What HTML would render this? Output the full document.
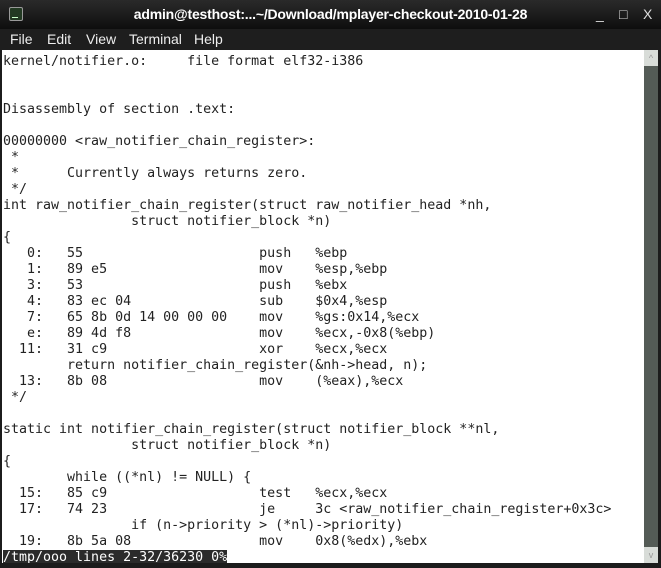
<!DOCTYPE html>
<html><head><meta charset="utf-8"><style>
*{margin:0;padding:0;box-sizing:border-box}
body{width:661px;height:568px;background:#1c1c1c;position:relative;overflow:hidden;font-family:"Liberation Sans",sans-serif}
#title{position:absolute;left:0;top:0;width:661px;height:29px;background:linear-gradient(#2a2a2a,#0e0e0e);color:#fff;}
#title .t{position:absolute;left:0;width:661px;top:6px;text-align:center;font-size:14px;font-weight:bold;letter-spacing:-0.2px}
#icon{position:absolute;left:9px;top:7px;width:14px;height:14px;border:1px solid #9a9a9a;background:#233a23;border-radius:2px}
#icon:after{content:"";position:absolute;left:2px;bottom:2px;width:6px;height:1px;background:#cfc}
.ctl{position:absolute;top:6px;color:#ddd;font-size:14px}
#menu{position:absolute;left:0;top:29px;width:661px;height:21px;background:#1e1e1e;color:#eee;font-size:14px}
#menu span{position:absolute;top:2px}
#term{position:absolute;left:2px;top:50px;width:642px;height:513px;background:#fff;overflow:hidden}
pre{position:absolute;left:1px;top:4px;font-family:"DejaVu Sans Mono","Liberation Mono",monospace;font-size:13.3px;line-height:16px;color:#222;white-space:pre}
.st{background:#2b2b2b;color:#fff}
#sb{position:absolute;left:644px;top:50px;width:14px;height:513px;background:#545b56}
#sb .a{position:absolute;left:0;width:14px;height:16px;background:#d8dcd8;color:#999;font-size:9px;text-align:center;line-height:16px}
</style></head><body>
<div id="title"><div id="icon"></div><div class="t">admin@testhost:...~/Download/mplayer-checkout-2010-01-28</div>
<span class="ctl" style="left:596px">_</span><span class="ctl" style="left:619px">□</span><span class="ctl" style="left:643px">X</span></div>
<div id="menu"><span style="left:10px">File</span><span style="left:47px">Edit</span><span style="left:86px">View</span><span style="left:129px">Terminal</span><span style="left:194px">Help</span></div>
<div id="term"><pre>kernel/notifier.o:     file format elf32-i386


Disassembly of section .text:

00000000 &lt;raw_notifier_chain_register&gt;:
 *
 *      Currently always returns zero.
 */
int raw_notifier_chain_register(struct raw_notifier_head *nh,
                struct notifier_block *n)
{
   0:   55                      push   %ebp
   1:   89 e5                   mov    %esp,%ebp
   3:   53                      push   %ebx
   4:   83 ec 04                sub    $0x4,%esp
   7:   65 8b 0d 14 00 00 00    mov    %gs:0x14,%ecx
   e:   89 4d f8                mov    %ecx,-0x8(%ebp)
  11:   31 c9                   xor    %ecx,%ecx
        return notifier_chain_register(&amp;nh-&gt;head, n);
  13:   8b 08                   mov    (%eax),%ecx
 */

static int notifier_chain_register(struct notifier_block **nl,
                struct notifier_block *n)
{
        while ((*nl) != NULL) {
  15:   85 c9                   test   %ecx,%ecx
  17:   74 23                   je     3c &lt;raw_notifier_chain_register+0x3c&gt;
                if (n-&gt;priority &gt; (*nl)-&gt;priority)
  19:   8b 5a 08                mov    0x8(%edx),%ebx
<span class="st">/tmp/ooo lines 2-32/36230 0%</span></pre></div>
<div id="sb"><div class="a" style="top:0">^</div><div class="a" style="bottom:0">v</div></div>
</body></html>
